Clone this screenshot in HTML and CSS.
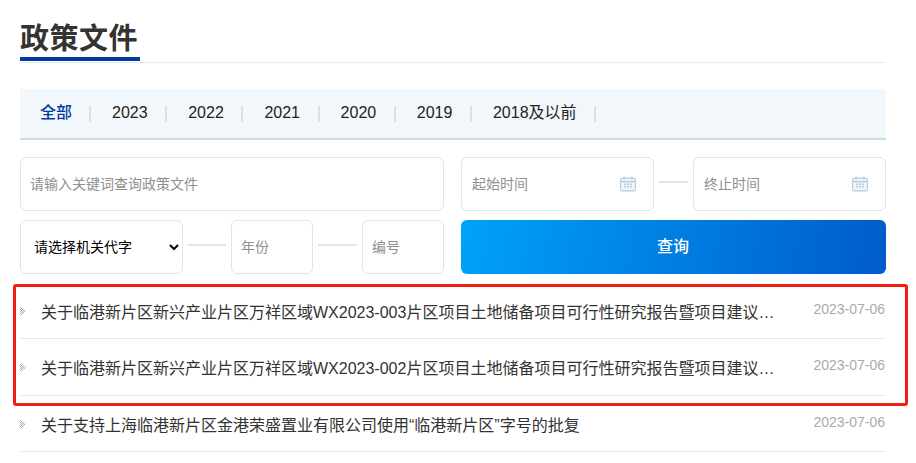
FILE: index.html
```html
<!DOCTYPE html>
<html lang="zh-CN">
<head>
<meta charset="utf-8">
<title>政策文件</title>
<link rel="stylesheet" href="styles.css">
</head>
<body>
<main class="page">
  <header class="head"><h1 class="head-title">政策文件</h1></header>
  <nav class="tabs">
    <a class="tab tab-on">全部</a>
    <a class="tab">2023</a>
    <a class="tab">2022</a>
    <a class="tab">2021</a>
    <a class="tab">2020</a>
    <a class="tab">2019</a>
    <a class="tab">2018及以前</a>
  </nav>
  <form class="search">
    <div class="col col-left">
      <input class="field field-wide" placeholder="请输入关键词查询政策文件">
      <div class="line">
        <select class="field field-select"><option>请选择机关代字</option></select>
        <span class="dash dash-a"></span>
        <input class="field field-small" placeholder="年份">
        <span class="dash dash-b"></span>
        <input class="field field-small" placeholder="编号">
      </div>
    </div>
    <div class="col">
      <div class="line">
        <label class="date">
          <input class="date-input" placeholder="起始时间">
          <svg class="cal" viewBox="0 0 16 16" width="16" height="16"><rect x="0.6" y="2.1" width="14.8" height="12.8" rx="1.8" fill="#f0f5fa" stroke="#b4cadf" stroke-width="1.1"/><path d="M.6 5.6h14.8" stroke="#b4cadf" stroke-width="1.2"/><path d="M4.2 0.6v3M11.8 0.6v3" stroke="#b4cadf" stroke-width="1.1"/><path d="M4 8.2h2M7 8.2h2M10 8.2h2M4 10.8h2M7 10.8h2M10 10.8h2" stroke="#b9cde0" stroke-width="1.4"/></svg>
        </label>
        <span class="dash dash-c"></span>
        <label class="date">
          <input class="date-input" placeholder="终止时间">
          <svg class="cal" viewBox="0 0 16 16" width="16" height="16"><rect x="0.6" y="2.1" width="14.8" height="12.8" rx="1.8" fill="#f0f5fa" stroke="#b4cadf" stroke-width="1.1"/><path d="M.6 5.6h14.8" stroke="#b4cadf" stroke-width="1.2"/><path d="M4.2 0.6v3M11.8 0.6v3" stroke="#b4cadf" stroke-width="1.1"/><path d="M4 8.2h2M7 8.2h2M10 8.2h2M4 10.8h2M7 10.8h2M10 10.8h2" stroke="#b9cde0" stroke-width="1.4"/></svg>
        </label>
      </div>
      <button class="submit" type="button">查询</button>
    </div>
  </form>
  <div class="list-wrap">
    <ul class="list">
      <li class="row">
        <span class="arrow"></span>
        <a class="row-title">关于临港新片区新兴产业片区万祥区域WX2023-003片区项目土地储备项目可行性研究报告暨项目建议…</a>
        <time class="row-date">2023-07-06</time>
      </li>
      <li class="row">
        <span class="arrow"></span>
        <a class="row-title">关于临港新片区新兴产业片区万祥区域WX2023-002片区项目土地储备项目可行性研究报告暨项目建议…</a>
        <time class="row-date">2023-07-06</time>
      </li>
      <li class="row">
        <span class="arrow"></span>
        <a class="row-title">关于支持上海临港新片区金港荣盛置业有限公司使用“临港新片区”字号的批复</a>
        <time class="row-date">2023-07-06</time>
      </li>
    </ul>
    <div class="mark"></div>
  </div>
</main>
</body>
</html>
```
FILE: styles.css
```css
* { box-sizing: border-box; }
html, body { margin: 0; padding: 0; background: #fff; }
body { font-family: "Liberation Sans", "Noto Sans CJK SC", sans-serif; color: #333; height: 463px; overflow: hidden; }
.page { width: 866px; margin-left: 20px; padding-top: 17px; }

.head { height: 46px; border-bottom: 1px solid #e9ebee; }
.head-title { display: block; margin: 0; height: 44px; width: 120px; font-size: 29px; line-height: 44px; font-weight: 700; letter-spacing: 0.5px; color: #333; border-bottom: 4px solid #003b9f; white-space: nowrap; }

.tabs { display: flex; align-items: center; height: 51px; margin-top: 26px; padding-left: 20px; background: #f2f7fb; border-bottom: 2px solid #c9dde6; }
.tab { display: block; height: 16px; padding: 0 17.6px 0 21px; font-size: 16px; line-height: 14px; color: #222; border-right: 2px solid #d5e3ea; white-space: nowrap; }
.tab-on { padding-left: 0; padding-right: 17px; color: #003b9f; font-weight: 500; }

.search { display: flex; gap: 17px; margin-top: 17px; }
.col { display: flex; flex-direction: column; gap: 9px; width: 425px; }
.col-left { width: 424px; }
.line { display: flex; align-items: center; }
.field, .date { height: 54px; border: 1px solid #e3e3e3; border-radius: 6px; background: #fff; font-family: inherit; font-size: 14px; outline: none; }
.field { padding: 0 9px; color: #333; }
.field::placeholder, .date-input::placeholder { color: #8f8f8f; opacity: 1; }
.field-wide { width: 100%; }
.field-select { width: 163px; padding: 0 6px 0 9px; color: #000; font-weight: 400; }
.field-small { width: 82px; }
.dash { display: block; height: 2px; margin: 0 5px 5px; background: #e4e4e4; }
.dash-a { width: 38px; }
.dash-b { width: 39px; }
.dash-c { width: 29px; }
.date { display: flex; align-items: center; width: 193px; padding: 0 17.5px 0 10px; }
.date-input { flex: 1; min-width: 0; padding: 0; border: 0; outline: none; font-family: inherit; font-size: 14px; background: none; }
.cal { flex: none; display: block; }
.submit { height: 54px; padding: 0 1px 5px 0; border: 0; border-radius: 6px; background: linear-gradient(100deg, #00a2f8, #005bca); color: #fff; font-family: inherit; font-size: 16px; font-weight: 500; }

.list-wrap { position: relative; margin-top: 8.5px; }
.list { margin: 0; padding: 0; list-style: none; }
.row { display: flex; height: 56.5px; border-bottom: 1px solid #e9e9e9; align-items: flex-start; }
.arrow { flex: none; display: block; width: 6px; height: 10px; margin-top: 23.5px; background: repeating-conic-gradient(#a8a8a8 0 25%, #fff 0 50%) 0 0 / 2px 2px; clip-path: polygon(0 0, 100% 50%, 0 100%); }
.row-title { flex: none; width: 740px; margin-left: 15px; margin-top: 19px; font-size: 16px; line-height: 22px; color: #333; white-space: nowrap; }
.row-date { margin-left: auto; margin-top: 17px; margin-right: 1px; font-size: 14px; line-height: 18px; color: #aaa; white-space: nowrap; }
.mark { position: absolute; left: -7px; top: 1.5px; width: 895px; height: 122px; border: 3px solid #f21d12; border-radius: 3px; pointer-events: none; }
```
